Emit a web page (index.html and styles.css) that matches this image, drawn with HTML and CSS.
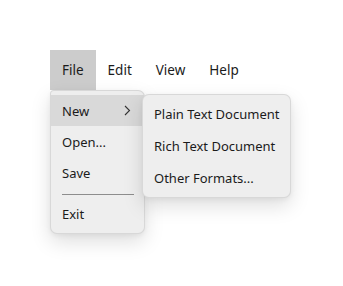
FILE: index.html
```html
<!DOCTYPE html>
<html>
<head>
<meta charset="utf-8">
<link rel="stylesheet" href="styles.css">
</head>
<body>
<div class="stage">
  <div class="menubar">
    <div class="top-item active">File
      <div class="menu main">
        <div class="item hover">
          <span>New</span>
          <svg class="chev" width="7" height="11" viewBox="0 0 7 11"><path d="M1 1 L5.5 5.5 L1 10" fill="none" stroke="#333" stroke-width="1.1"/></svg>
          <div class="menu sub">
            <div class="item">Plain Text Document</div>
            <div class="item">Rich Text Document</div>
            <div class="item">Other Formats...</div>
          </div>
        </div>
        <div class="item">Open...</div>
        <div class="item">Save</div>
        <div class="sep"></div>
        <div class="item">Exit</div>
      </div>
    </div>
    <div class="top-item">Edit</div>
    <div class="top-item">View</div>
    <div class="top-item">Help</div>
  </div>
</div>
</body>
</html>
```
FILE: styles.css
```css
html, body {
  margin: 0;
  background: #ffffff;
}
body {
  font-family: "Segoe UI", "Noto Sans", "Open Sans", sans-serif;
  font-size: 13px;
  color: #1b1b1b;
}
.stage {
  box-sizing: border-box;
  min-height: 286px;
  padding: 50px 0 0 50px;
}
.menubar {
  display: flex;
  height: 40px;
}
.top-item {
  position: relative;
  padding: 0 12px;
  font-size: 13.5px;
  line-height: 41px;
  height: 40px;
}
.top-item.active {
  background: #cccccc;
}
.menu {
  position: absolute;
  background: #eeeeee;
  border: 1px solid rgba(0, 0, 0, 0.09);
  border-radius: 7px;
  box-shadow: 0 8px 20px rgba(0, 0, 0, 0.13), 0 2px 5px rgba(0, 0, 0, 0.05);
  font-size: 13px;
  line-height: normal;
}
.main {
  top: 40px;
  left: 0;
  width: 93px;
  padding: 4px 0;
  border-top-left-radius: 4px;
}
.item {
  position: relative;
  display: flex;
  align-items: center;
  justify-content: space-between;
  height: 31px;
  padding: 0 13px 0 11px;
  white-space: nowrap;
}
.item.hover {
  background: #d9d9d9;
}
.chev {
  display: block;
}
.sep {
  margin: 6px 10px 3px 11px;
  border-top: 1px solid #8d8d8d;
}
.sub {
  top: -1px;
  left: 91px;
  width: 147px;
  padding: 3px 0 3px;
  z-index: 2;
}
.sub .item {
  height: 32px;
  padding: 0 11px;
}
```
